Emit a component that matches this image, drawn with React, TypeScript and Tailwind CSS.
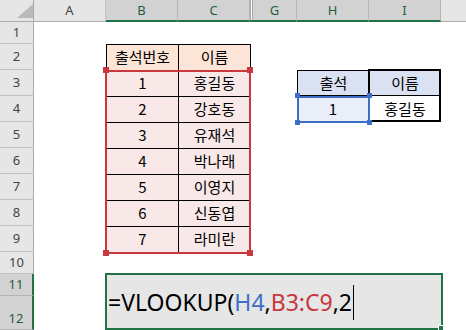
import React from "react";

function ColHead({ label, cls, selected }: { label: string; cls: string; selected: boolean }) {
  return (
    <div
      className={
        cls +
        " row-start-1 flex items-center justify-center text-[13px] leading-none " +
        (selected
          ? "bg-[#d2d2d2] border-b-2 border-b-[#217346] border-r border-r-[#b4b4b4] text-[#1f5e3a]"
          : "bg-[#e6e6e6] border-b border-b-[#ababab] border-r border-r-[#c2c2c2] text-[#444444]")
      }
    >
      {label}
    </div>
  );
}

function RowHead({ label, cls, selected, extra = "" }: { label: string; cls: string; selected: boolean; extra?: string }) {
  return (
    <div
      className={
        cls +
        " col-start-1 flex justify-center text-[13px] leading-none " +
        extra +
        " " +
        (selected
          ? "bg-[#d2d2d2] border-r-2 border-r-[#217346] border-b border-b-[#b4b4b4] text-[#1f5e3a]"
          : "bg-[#e6e6e6] border-r border-r-[#ababab] border-b border-b-[#c2c2c2] text-[#444444]")
      }
    >
      {label}
    </div>
  );
}

const data: [string, string][] = [
  ["1", "홍길동"],
  ["2", "강호동"],
  ["3", "유재석"],
  ["4", "박나래"],
  ["5", "이영지"],
  ["6", "신동엽"],
  ["7", "라미란"],
];

const kr = "font-['Noto_Sans_CJK_KR','Noto_Sans',sans-serif]";

export default function App() {
  return (
    <div className="relative grid h-[330px] w-[466px] grid-cols-[34px_72px_72px_72px_3px_44px_72px_72px_1fr] grid-rows-[22px_22px_26px_26px_26px_26px_26px_26px_26px_26px_22px_22px_1fr] overflow-hidden bg-white font-['Noto_Sans',sans-serif]">
      {/* corner */}
      <div className="relative col-start-1 row-start-1 border-b border-r border-[#ababab] bg-[#e6e6e6]">
        <svg className="absolute left-[17px] top-[4px]" width="16" height="14" viewBox="0 0 16 14">
          <polygon points="16,0 16,14 0,14" fill="#b9b9b9" />
        </svg>
      </div>
      {/* column headers */}
      <ColHead label="A" cls="col-start-2" selected={false} />
      <ColHead label="B" cls="col-start-3" selected={true} />
      <ColHead label="C" cls="col-start-4" selected={true} />
      <div className="col-start-5 row-start-1 flex border-b-2 border-b-[#217346] bg-[#d2d2d2]">
        <div className="w-px bg-[#a8a8a8]" />
        <div className="w-px bg-white" />
        <div className="w-px bg-[#a8a8a8]" />
      </div>
      <ColHead label="G" cls="col-start-6" selected={true} />
      <ColHead label="H" cls="col-start-7" selected={true} />
      <ColHead label="I" cls="col-start-8" selected={true} />
      <div className="col-start-9 row-start-1 border-b border-b-[#ababab] bg-[#e6e6e6]" />

      {/* row headers */}
      <RowHead label="1" cls="row-start-2" selected={false} extra="items-center" />
      <RowHead label="2" cls="row-start-3" selected={false} extra="items-center" />
      <RowHead label="3" cls="row-start-4" selected={false} extra="items-center" />
      <RowHead label="4" cls="row-start-5" selected={false} extra="items-center" />
      <RowHead label="5" cls="row-start-6" selected={false} extra="items-center" />
      <RowHead label="6" cls="row-start-7" selected={false} extra="items-center" />
      <RowHead label="7" cls="row-start-8" selected={false} extra="items-center" />
      <RowHead label="8" cls="row-start-9" selected={false} extra="items-center" />
      <RowHead label="9" cls="row-start-10" selected={false} extra="items-center" />
      <RowHead label="10" cls="row-start-11" selected={false} extra="items-center" />
      <RowHead label="11" cls="row-start-12" selected={true} extra="items-center" />
      <RowHead label="12" cls="row-start-13" selected={true} extra="items-start pt-[16px]" />

      {/* attendance table B2:C9 */}
      <div className={"relative col-start-3 col-end-5 row-start-3 row-end-11 grid h-[209px] w-[145px] grid-cols-2 grid-rows-8 border-l border-t border-black text-[15px] text-black " + kr}>
        <div className="flex items-center justify-center border-b border-r border-black bg-[#fce4d6]">출석번호</div>
        <div className="flex items-center justify-center border-b border-r border-black bg-[#fce4d6]">이름</div>
        {data.map(([n, name]) => (
          <React.Fragment key={n}>
            <div className="flex items-center justify-center border-b border-r border-black bg-[#f9e8e8]">{n}</div>
            <div className="flex items-center justify-center border-b border-r border-black bg-[#f9e8e8]">{name}</div>
          </React.Fragment>
        ))}
        {/* red reference range */}
        <div className="pointer-events-none absolute left-[-2px] right-0 top-[25px] bottom-[-1px] border-2 border-[#c9373f]" />
        <div className="absolute left-[-4px] top-[22px] h-[6px] w-[6px] bg-[#c9373f]" />
        <div className="absolute left-[140px] top-[22px] h-[6px] w-[6px] bg-[#c9373f]" />
        <div className="absolute left-[-4px] top-[205px] h-[6px] w-[6px] bg-[#c9373f]" />
        <div className="absolute left-[140px] top-[205px] h-[6px] w-[6px] bg-[#c9373f]" />
      </div>

      {/* lookup table H3:I4 */}
      <div className={"relative col-start-7 col-end-9 row-start-4 row-end-6 grid grid-cols-2 grid-rows-2 text-[15px] text-black " + kr}>
        <div className="flex items-center justify-center border-l border-t border-b border-black bg-[#d9e1f2]">출석</div>
        <div className="flex items-center justify-center border-t border-b border-black bg-[#d9e1f2]">이름</div>
        <div className="flex items-center justify-center bg-[#e9eef8]">1</div>
        <div className="flex items-center justify-center bg-white">홍길동</div>
        {/* thick outline I3:I4 */}
        <div className="pointer-events-none absolute left-[71px] top-[-1px] h-[53px] w-[73px] border-2 border-black" />
        {/* blue reference H4 */}
        <div className="pointer-events-none absolute left-0 top-[26px] h-[27px] w-[73px] border-2 border-[#3d6fc6]" />
        <div className="absolute left-[-2px] top-[23px] h-[5px] w-[5px] bg-[#3d6fc6]" />
        <div className="absolute left-[70px] top-[23px] h-[5px] w-[5px] bg-[#3d6fc6]" />
        <div className="absolute left-[-2px] top-[50px] h-[5px] w-[5px] bg-[#3d6fc6]" />
        <div className="absolute left-[70px] top-[50px] h-[5px] w-[5px] bg-[#3d6fc6]" />
      </div>

      {/* formula editing box B11:I12 */}
      <div className="relative col-start-3 col-end-9 row-start-12 row-end-14 -ml-px -mt-px flex h-[57px] w-[338px] items-center border-2 border-[#217346] bg-[#e6e6e6] pl-px pt-[2px] text-[23px] leading-none text-black">
        <span>=VLOOKUP(</span>
        <span className="text-[#3d6fc6]">H4</span>
        <span>,</span>
        <span className="text-[#c9373f]">B3:C9</span>
        <span>,2</span>
        <span className="ml-[1px] inline-block h-[35px] w-px bg-black" />
        <div className="absolute bottom-[-3px] right-[-3px] h-[6px] w-[6px] border border-white bg-[#217346]" />
      </div>
    </div>
  );
}
